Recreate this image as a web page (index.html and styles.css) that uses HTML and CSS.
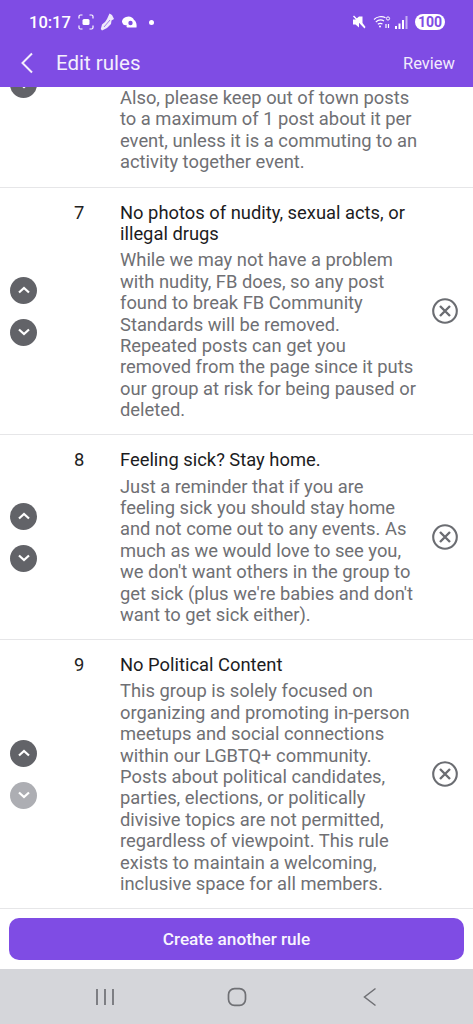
FILE: index.html
```html
<!DOCTYPE html>
<html lang="en">
<head>
<meta charset="utf-8">
<title>Edit rules</title>
<link rel="stylesheet" href="styles.css">
</head>
<body>
<div class="screen">
  <header class="top">
    <div class="status">
      <span class="time">10:17</span>
      <svg class="st-ic" width="16" height="16" viewBox="0 0 16 16" fill="none" stroke="#fff" stroke-width="1.200"><path d="M1 4.500V2.500Q1 1 2.500 1H4.500M11.500 1H13.500Q15 1 15 2.500V4.500M15 11.500V13.500Q15 15 13.500 15H11.500M4.500 15H2.500Q1 15 1 13.500V11.500"/><rect x="4.500" y="5" width="7" height="6" rx="1.500" fill="#fff" stroke="none"/></svg>
      <svg class="st-ic" width="15" height="18" viewBox="0 0 15 18" fill="#efe9fb"><path d="M9.500 0.500 12 2 14 6 11.500 7.500 11 11 7 15 2 17.500 0.800 16 2 11.500 5 9 7 6Z"/><path d="M4 14 10 7" stroke="#7f4ce4" stroke-width=".7"/></svg>
      <svg class="st-ic" width="16" height="13" viewBox="0 0 16 13" fill="#fff"><path d="M5 1C8 -0.500 12 1 13 4 15 5 16 8 15.500 11.500H7C5.500 11.500 5 10 6 9 4 9.500 2 9 1.500 7 0 5 2 2 5 1Z"/><circle cx="9.500" cy="7" r="2.200" fill="#7f4ce4"/></svg>
      <span class="dot"></span>
      <span class="st-space"></span>
      <svg class="st-ic" width="14" height="14" viewBox="0 0 14 14" fill="#fff"><path d="M1 4.500H3.500L7 1.500 10.500 1.500V8L13.500 12 12.500 13.500 1 1.500 2 .5 7 5.500V12.500L3.500 9.500H1Z"/></svg>
      <svg class="st-ic wifi" width="18" height="14" viewBox="0 0 18 14" fill="none" stroke="#fff" stroke-width="1.100"><path d="M1 4.500C4 1.500 9 0.800 12.500 2.800M2.800 7C5 5 8.500 4.500 11 6M4.800 9.300C6.200 8.300 8 8.200 9.500 9"/><circle cx="7" cy="11.500" r="1" fill="#fff" stroke="none"/><path d="M13 9V13M15.500 13V9" stroke-width="1.200"/><circle cx="15" cy="3.500" r="1.600" stroke-width="1"/></svg>
      <svg class="st-ic signal" width="13" height="13" viewBox="0 0 13 13"><path d="M0 10h2v3H0zM3.500 7.500h2V13h-2zM7 4h2v9H7z" fill="#fff"/><path d="M10.500 0h2v13h-2z" fill="#fff" opacity=".55"/></svg>
      <span class="battery">100</span>
    </div>
    <div class="appbar">
      <svg class="back" width="16" height="22" viewBox="0 0 16 22" fill="none" stroke="#f4effd" stroke-width="2"><path d="M13 1.500 3.500 11 13 20.500"/></svg>
      <span class="title">Edit rules</span>
      <span class="review">Review</span>
    </div>
  </header>

  <main class="list">
    <section class="rule rule-cut">
      <div class="moves">
        <span class="move"></span>
        <span class="move"><svg width="14" height="8" viewBox="0 0 14 8" fill="none" stroke="#fff" stroke-width="2.200"><path d="M2 1.500 7 6 12 1.500"/></svg></span>
      </div>
      <div class="num"></div>
      <div class="text">
        <p class="body">Also, please keep out of town posts<br>to a maximum of 1 post about it per<br>event, unless it is a commuting to an<br>activity together event.</p>
      </div>
      <div class="del"></div>
    </section>

    <section class="rule">
      <div class="moves">
        <span class="move"><svg width="14" height="8" viewBox="0 0 14 8" fill="none" stroke="#fff" stroke-width="2.200"><path d="M2 6.500 7 2 12 6.500"/></svg></span>
        <span class="move"><svg width="14" height="8" viewBox="0 0 14 8" fill="none" stroke="#fff" stroke-width="2.200"><path d="M2 1.500 7 6 12 1.500"/></svg></span>
      </div>
      <div class="num">7</div>
      <div class="text">
        <h2 class="name">No photos of nudity, sexual acts, or<br>illegal drugs</h2>
        <p class="body">While we may not have a problem<br>with nudity, FB does, so any post<br>found to break FB Community<br>Standards will be removed.<br>Repeated posts can get you<br>removed from the page since it puts<br>our group at risk for being paused or<br>deleted.</p>
      </div>
      <div class="del"><svg width="28" height="28" viewBox="0 0 28 28" fill="none" stroke="#6b6d72" stroke-width="2.100"><circle cx="14" cy="14" r="11.800"/><path d="M9 9 19 19M19 9 9 19" stroke-width="2.400"/></svg></div>
    </section>

    <section class="rule">
      <div class="moves">
        <span class="move"><svg width="14" height="8" viewBox="0 0 14 8" fill="none" stroke="#fff" stroke-width="2.200"><path d="M2 6.500 7 2 12 6.500"/></svg></span>
        <span class="move"><svg width="14" height="8" viewBox="0 0 14 8" fill="none" stroke="#fff" stroke-width="2.200"><path d="M2 1.500 7 6 12 1.500"/></svg></span>
      </div>
      <div class="num">8</div>
      <div class="text">
        <h2 class="name">Feeling sick? Stay home.</h2>
        <p class="body">Just a reminder that if you are<br>feeling sick you should stay home<br>and not come out to any events. As<br>much as we would love to see you,<br>we don't want others in the group to<br>get sick (plus we're babies and don't<br>want to get sick either).</p>
      </div>
      <div class="del"><svg width="28" height="28" viewBox="0 0 28 28" fill="none" stroke="#6b6d72" stroke-width="2.100"><circle cx="14" cy="14" r="11.800"/><path d="M9 9 19 19M19 9 9 19" stroke-width="2.400"/></svg></div>
    </section>

    <section class="rule rule-last">
      <div class="moves">
        <span class="move"><svg width="14" height="8" viewBox="0 0 14 8" fill="none" stroke="#fff" stroke-width="2.200"><path d="M2 6.500 7 2 12 6.500"/></svg></span>
        <span class="move move-off"><svg width="14" height="8" viewBox="0 0 14 8" fill="none" stroke="#fff" stroke-width="2.200"><path d="M2 1.500 7 6 12 1.500"/></svg></span>
      </div>
      <div class="num">9</div>
      <div class="text">
        <h2 class="name">No Political Content</h2>
        <p class="body">This group is solely focused on<br>organizing and promoting in-person<br>meetups and social connections<br>within our LGBTQ+ community.<br>Posts about political candidates,<br>parties, elections, or politically<br>divisive topics are not permitted,<br>regardless of viewpoint. This rule<br>exists to maintain a welcoming,<br>inclusive space for all members.</p>
      </div>
      <div class="del"><svg width="28" height="28" viewBox="0 0 28 28" fill="none" stroke="#6b6d72" stroke-width="2.100"><circle cx="14" cy="14" r="11.800"/><path d="M9 9 19 19M19 9 9 19" stroke-width="2.400"/></svg></div>
    </section>
  </main>

  <div class="action">
    <button class="create">Create another rule</button>
  </div>

  <nav class="sysnav">
    <svg width="20" height="18" viewBox="0 0 20 18" fill="none" stroke="#6f7074" stroke-width="1.700"><path d="M2 1V17M10 1V17M18 1V17"/></svg>
    <svg width="20" height="20" viewBox="0 0 20 20" fill="none" stroke="#6f7074" stroke-width="1.700"><rect x="1.500" y="1.700" width="17" height="16.600" rx="6"/></svg>
    <svg class="sys-back" width="14" height="20" viewBox="0 0 14 20" fill="none" stroke="#6f7074" stroke-width="1.500"><path d="M12.500 1.500 1.500 10 12.500 18.500"/></svg>
  </nav>
</div>
</body>
</html>
```
FILE: styles.css
```css
* { box-sizing: border-box; }
html, body { margin: 0; padding: 0; }
body { background: #fff; font-family: Roboto, "Noto Sans", sans-serif; }
.screen { width: 473px; height: 1024px; display: flex; flex-direction: column; overflow: hidden; background: #fff; }

.top { height: 87px; flex: none; background: #7f4ce4; color: #fff; position: relative; z-index: 1; }
.status { height: 44px; display: flex; align-items: center; padding: 0 28px 0 29px; gap: 6px; }
.time { font-size: 16.500px; font-weight: 500; margin-right: 1px; }
.st-ic { flex: none; }
.dot { width: 5px; height: 5px; border-radius: 50%; background: #fff; margin-left: 6px; }
.st-space { flex: 1; }
.wifi { margin-left: 1px; }
.signal { margin-left: -2px; }
.battery { background: #fff; color: #7f4ce4; font-size: 14px; font-weight: 700; line-height: 16px; height: 16px; width: 30px; text-align: center; border-radius: 8px; margin-left: 1px; }
.appbar { height: 38px; display: flex; align-items: center; padding: 0 18px 0 19px; }
.back { flex: none; }
.title { font-size: 20.500px; margin-left: 21px; color: #f4effd; flex: 1; }
.review { font-size: 16.500px; color: #f1ebfc; }

.list { flex: 1; min-height: 0; overflow: hidden; }
.rule { display: grid; grid-template-columns: 74px 46px 1fr 62px; border-bottom: 1px solid #e6e6e8; padding: 14px 0 13.500px; }
.rule-cut { margin-top: -146px; padding-bottom: 14px; }
.rule-cut .text { padding-top: 132px; }
.rule-last { border-bottom: 2px solid #e6e6e8; }
.moves { display: flex; flex-direction: column; align-items: center; justify-content: center; gap: 15px; padding-right: 27px; }
.move { width: 27px; height: 27px; border-radius: 50%; background: #626368; display: flex; align-items: center; justify-content: center; flex: none; }
.move-off { background: #adaeb3; }
.num { font-size: 18.350px; line-height: 21.400px; color: #222; }
.text { min-width: 0; }
.name { margin: 0 0 5px; font-size: 18.350px; font-weight: 400; line-height: 21.400px; color: #1c1c1e; white-space: nowrap; }
.body { margin: 0; font-size: 18.350px; line-height: 21.400px; color: #6f7074; white-space: nowrap; }
.del { display: flex; align-items: center; justify-content: center; padding-left: 6px; }

.action { flex: none; height: 60px; padding: 9px; background: #fff; }
.create { width: 100%; height: 42px; border: 0; border-radius: 10px; background: #7f4ce4; color: #f8f5fe; font-family: Roboto, sans-serif; font-size: 17.200px; font-weight: 500; }

.sysnav { flex: none; height: 55px; background: #d5d6da; display: flex; align-items: center; gap: 112px; padding-left: 95px; }
.sys-back { margin-left: 4px; }
```
